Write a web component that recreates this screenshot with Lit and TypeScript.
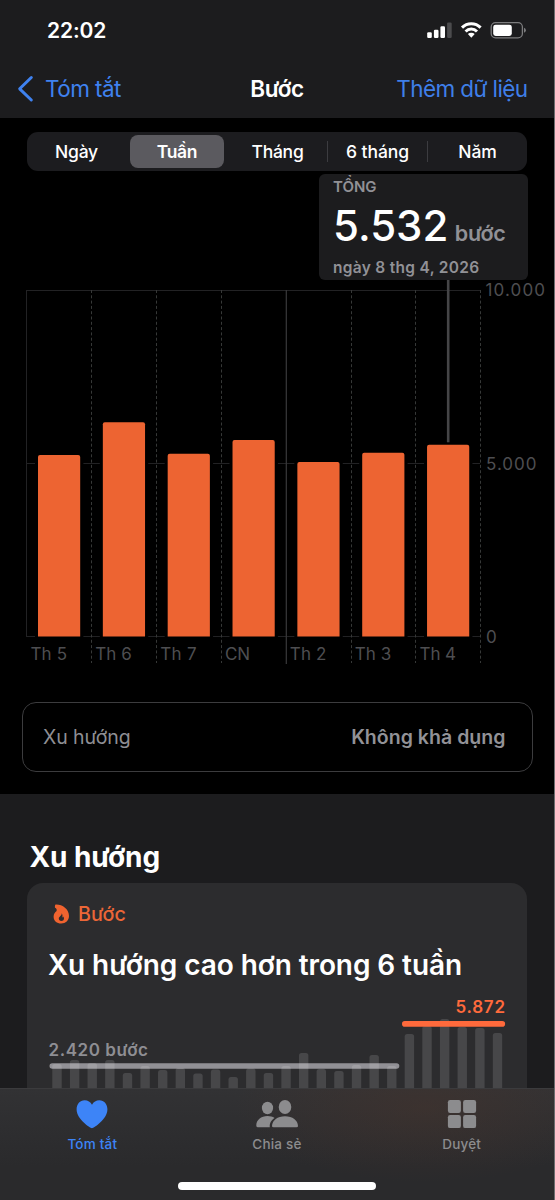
import { LitElement, html, svg, css } from "lit";
import { customElement, property } from "lit/decorators.js";

const FONT = css`Inter, "Noto Sans", sans-serif`;

const days = [
  { label: "Th 5", top: 455 },
  { label: "Th 6", top: 422.3 },
  { label: "Th 7", top: 453.7 },
  { label: "CN", top: 440 },
  { label: "Th 2", top: 462 },
  { label: "Th 3", top: 452.7 },
  { label: "Th 4", top: 444.7 },
];
const weeks = [
  1064, 1060, 1063, 1060, 1073, 1066, 1070, 1068, 1073.5, 1069.5, 1077, 1068.5, 1073,
  1066, 1053, 1069, 1071, 1065, 1055, 1066, 1034, 1026, 1019, 1027, 1028, 1033,
];

@customElement("status-bar")
class StatusBar extends LitElement {
  static styles = css`
    :host { display: flex; justify-content: space-between; height: 60px; font-family: ${FONT}; }
    .time { margin-left: 47px; line-height: 60px; font-size: 21px; font-weight: 600; color: #fff; letter-spacing: -0.1px; padding-top: 1px; height: 59px; }
    svg { display: block; margin: 20px 27px 0 0; }
  `;
  render() {
    return html`<span class="time">22:02</span>
      <svg width="102" height="20" viewBox="425 20 102 20">
        <g fill="#fff">
          <rect x="427.2" y="32.3" width="4.6" height="5.7" rx="1.2" />
          <rect x="433.9" y="29.7" width="4.6" height="8.3" rx="1.2" />
          <rect x="440.4" y="26.2" width="4.6" height="11.8" rx="1.2" />
          <rect x="447.1" y="22.6" width="4.6" height="15.4" rx="1.2" fill="#4b4b4d" />
        </g>
        <g fill="none" stroke="#fff" stroke-width="3">
          <path d="M462 27.6A13.2 13.2 0 0 1 480.6 27.6" />
          <path d="M465.6 31.5A8 8 0 0 1 477 31.5" />
        </g>
        <path d="M467.9 34.1A4.8 4.8 0 0 1 474.7 34.1L471.3 37.8Z" fill="#fff" />
        <rect x="491.2" y="22.7" width="31.2" height="15.2" rx="4.4" fill="none" stroke="#7c7c7e" stroke-width="1.3" />
        <rect x="493.2" y="24.7" width="18.6" height="11.3" rx="2.4" fill="#fff" />
        <path d="M524 27.8q1.9.6 1.9 2.5t-1.9 2.5z" fill="#7c7c7e" />
      </svg>`;
  }
}

@customElement("nav-bar")
class NavBar extends LitElement {
  static styles = css`
    :host { display: grid; grid-template-columns: 1fr auto 1fr; height: 58px; line-height: 58px; font-family: ${FONT}; font-size: 22.5px; white-space: nowrap; }
    .back { display: flex; align-items: flex-start; padding-left: 17px; gap: 11px; color: #3f82f0; letter-spacing: -0.55px; }
    .back svg { margin-top: 15px; flex: none; }
    .title { color: #fff; font-weight: 600; font-size: 22.5px; letter-spacing: -0.4px; }
    .add { text-align: right; padding-right: 26.5px; color: #3f7fe8; letter-spacing: -0.6px; }
  `;
  render() {
    return html`<span class="back"><svg width="17" height="28" viewBox="0 0 17 28"><path d="M14.3 2.5L2.7 13.8L14.3 25" fill="none" stroke="#3f82f0" stroke-width="3" stroke-linecap="round" stroke-linejoin="round" /></svg>Tóm tắt</span>
      <span class="title">Bước</span><span class="add">Thêm dữ liệu</span>`;
  }
}

@customElement("range-picker")
class RangePicker extends LitElement {
  static styles = css`
    :host { display: grid; grid-template-columns: repeat(5, 1fr); align-items: center; margin: 14px 27px 0; height: 39px; border-radius: 11px; background: #1c1c1f; font: 500 17.5px/33.5px ${FONT}; color: #fff; text-align: center; letter-spacing: -0.25px; }
    .seg { border-left: 1px solid transparent; line-height: 21px; }
    .seg:first-child { padding-right: 2px; }
    .line { border-color: #3c3c40; letter-spacing: -0.05px; }
    .on { background: #5b5a5f; border-radius: 8px; margin: 0 3px; line-height: 33.5px; border: 0; font-weight: 600; letter-spacing: -0.3px; }
  `;
  render() {
    return html`${["Ngày", "Tuần", "Tháng", "6 tháng", "Năm"].map(
      (t, i) => html`<span class="seg ${i === 1 ? "on" : ""} ${i > 2 ? "line" : ""}">${t}</span>`
    )}`;
  }
}

@customElement("step-chart")
class StepChart extends LitElement {
  static styles = css`
    :host { display: block; }
    svg { display: block; font-family: ${FONT}; }
    .axis { font-size: 17px; font-weight: 400; fill: #4e4e51; }
    .grid { stroke: #222224; stroke-width: 1; }
    .dash { stroke: #363837; stroke-width: 1; stroke-dasharray: 3 2.3; }
    .week { stroke: #39393b; stroke-width: 1.2; }
  `;
  render() {
    const x = (i: number) => 26.8 + i * 64.84;
    return html`<svg width="554" height="431" viewBox="0 271 554 431">
      <path class="grid" d="M27 290.5H480M27 463.5H480M27 636.5H480M26.5 290V637" />
      ${[1, 2, 3, 5, 6, 7].map((i) => svg`<path class="dash" d="M${Math.floor(x(i)) + 0.5} 290V663" />`)}
      <path class="week" d="M286.3 290V664" />
      ${days.map((d, i) => svg`
        <rect x=${x(i) + 8.2} y=${d.top - 3} width="48.4" height=${640 - d.top} fill="#000" />
        <path d="M${x(i) + 11.2} 636.5V${d.top + 2}q0-2 2-2h38.2q2 0 2 2V636.5z" fill="#ed6432" />
        <text class="axis" x=${x(i) + 3.7} y="660.3" textLength=${d.label === "CN" ? 25 : 36.5} lengthAdjust="spacing">${d.label}</text>`)}
      <text class="axis" x="485.5" y="296" textLength="59.5">10.000</text>
      <text class="axis" x="486" y="469.7" textLength="50.5">5.000</text>
      <text class="axis" x="486" y="643">0</text>
      <path d="M448.2 280V442.3" stroke="#454547" stroke-width="2.6" />
    </svg>`;
  }
}

@customElement("value-callout")
class ValueCallout extends LitElement {
  static styles = css`
    :host { display: block; box-sizing: border-box; width: 208.5px; height: 106.5px; padding: 3.5px 0 0 14px; border-radius: 6px; background: #1c1c1e; color: #919196; font-family: ${FONT}; font-weight: 600; white-space: nowrap; }
    .cap { font-size: 15px; line-height: 19px; font-weight: 600; }
    .row { display: flex; align-items: baseline; gap: 6.5px; height: 61.5px; line-height: 60px; font-size: 21.5px; font-weight: 600; letter-spacing: -0.3px; }
    .num { color: #fff; font-size: 42px; font-weight: 500; letter-spacing: 0; }
    .date { font-size: 15.5px; line-height: 20px; letter-spacing: 0.3px; }
  `;
  render() {
    return html`<div class="cap">TỔNG</div>
      <div class="row"><span class="num">5.532</span><span>bước</span></div>
      <div class="date">ngày 8 thg 4, 2026</div>`;
  }
}

@customElement("trend-card")
class TrendCard extends LitElement {
  static styles = css`
    :host { display: block; margin: 0 27px; height: 330px; background: #2c2c2e; border-radius: 16px; font-family: ${FONT}; white-space: nowrap; }
    .kind { display: flex; align-items: center; gap: 8px; padding: 18px 0 0 25px; height: 26px; color: #eb6637; font-size: 19.7px; font-weight: 500; letter-spacing: 0; }
    .title { margin: 18.5px 0 0.5px 21px; line-height: 38px; height: 38px; font-size: 28px; font-weight: 600; color: #fff; letter-spacing: -0.08px; }
    svg { display: block; }
    text { font-size: 17px; font-weight: 600; }
  `;
  render() {
    return html`<div class="kind"><svg width="18" height="20" viewBox="0 0 18 20"><path fill-rule="evenodd" fill="#f0632f" d="M3.6.6C10 .2 17 4.8 17 12.1c0 4.5-3.4 7.4-7.8 7.4-4.3 0-7.6-2.7-7.6-6.8C1.6 9.5 3.1 8.2 4.6 6.9 4.9 5 4.5 4.4 3 3.7 2.7 2.5 3 1.3 3.6.6zM9.7 9.3c.2 2.6-2.9 3.2-2.9 5.3 0 1.5 1.1 2.3 2.5 2.3s2.7-.8 2.7-2.5c0-.9-.4-1.5-.9-2-.1.7-.4.9-.8 1 .4-1.4.3-2.9-.6-4.1z"/></svg><span>Bước</span></div>
      <div class="title">Xu hướng cao hơn trong 6 tuần</div>
      <svg width="500" height="110" viewBox="27 984 500 110">
        <path d="M52.3 1066H396.5" stroke="#919095" stroke-width="5.6" stroke-linecap="round" />
        ${weeks.map((t, i) => svg`<rect x=${52.3 + i * 17.62} y=${t} width="9.4" height=${1110 - t} rx="2.5" fill="#fff" fill-opacity="0.13" />`)}
        <path d="M404.8 1023.9H502.3" stroke="#ff6a3c" stroke-width="5.6" stroke-linecap="round" />
        <text x="48.5" y="1055.5" textLength="99.5" fill="#8e8e93">2.420 bước</text>
        <text x="455.5" y="1013.3" textLength="49.5" fill="#ff6a3c">5.872</text>
      </svg>`;
  }
}

@customElement("tab-bar")
class TabBar extends LitElement {
  @property({ type: Number }) selected = 0;
  static styles = css`
    :host { display: flex; flex-direction: column; align-items: center; box-sizing: border-box; height: 112px; border-top: 1px solid #3b3b3d; background: radial-gradient(ellipse 190px 75px at 425px 18px, rgba(75, 52, 43, 0.42), transparent), linear-gradient(#323234, #2a2a2c 70%); font-family: ${FONT}; }
    .tabs { display: grid; grid-template-columns: repeat(3, 184.67px); height: 92px; align-self: stretch; }
    .tab { display: flex; flex-direction: column; align-items: center; color: #8c8c8e; font-size: 13.5px; font-weight: 500; letter-spacing: 0.2px; line-height: 18px; padding-top: 8px; gap: 4px; }
    .on { color: #3d84f7; }
    .home { width: 198px; height: 7.5px; border-radius: 4px; background: #fff; margin-top: 1.3px; }
    svg { display: block; }
  `;
  render() {
    const heart = html`<svg width="44" height="34" viewBox="0 0 44 34" fill="currentColor"><path d="M22 31.3C20 30.7 6.6 22.5 6.6 12.3 6.6 7 10 3.2 14.6 3.2c3.3 0 5.9 1.7 7.4 4.5 1.5-2.8 4.1-4.5 7.4-4.5 4.6 0 8 3.8 8 9.1C37.4 22.5 24 30.7 22 31.3z"/></svg>`;
    const people = html`<svg width="44" height="34" viewBox="0 0 44 34" fill="currentColor"><ellipse cx="12.5" cy="11" rx="5.6" ry="6.2"/><path d="M1.3 28.7C1 23 6.2 19 12.5 19c2.7 0 5.1.7 7.1 1.9-3.2 2-5.2 5-4.8 9.4H3Q1.4 30.2 1.3 28.7z"/><ellipse cx="30" cy="10" rx="6.3" ry="7"/><path d="M17 28.9C17.2 23.2 22.5 19.2 30 19.2S42.8 23.2 43 28.9q0 1.4-1.5 1.4H18.5q-1.5 0-1.5-1.4z"/></svg>`;
    const grid = html`<svg width="44" height="34" viewBox="0 0 44 34" fill="currentColor"><rect x="7.9" y="3" width="13" height="13" rx="2.2"/><rect x="23.1" y="3" width="13" height="13" rx="2.2"/><rect x="7.9" y="18.1" width="13" height="13" rx="2.2"/><rect x="23.1" y="18.1" width="13" height="13" rx="2.2"/></svg>`;
    const tabs = [{ i: heart, t: "Tóm tắt" }, { i: people, t: "Chia sẻ" }, { i: grid, t: "Duyệt" }];
    return html`<div class="tabs">${tabs.map((t, n) => html`<div class="tab ${n === this.selected ? "on" : ""}">${t.i}<span>${t.t}</span></div>`)}</div><div class="home"></div>`;
  }
}

@customElement("app-root")
class AppRoot extends LitElement {
  static styles = css`
    :host { display: block; position: relative; box-sizing: border-box; width: 555px; height: 1200px; overflow: hidden; border-right: 1px solid #6c6c6e; background: #1c1c1e; font-family: ${FONT}; }
    .top { height: 118px; background: #1c1c1e; }
    .main { height: 676px; background: #000; overflow: hidden; }
    .chart { position: relative; padding-top: 100px; }
    value-callout { position: absolute; left: 319px; top: 2.5px; }
    .trend { display: flex; justify-content: space-between; align-items: center; box-sizing: border-box; height: 70px; margin: 0 21.5px; padding: 0 26px 0 20.5px; border: 1.3px solid #3c3c3e; border-radius: 14px; color: #8e8e93; font-size: 19.5px; letter-spacing: -0.1px; }
    .trend b { font-weight: 600; color: #929297; letter-spacing: 0.03px; }
    h2 { margin: 0; padding: 44px 0 0 29.5px; height: 45px; line-height: 38px; font-size: 28px; font-weight: 700; letter-spacing: -0.1px; color: #fff; }
    tab-bar { position: absolute; left: 0; right: 0; bottom: 0; }
  `;
  render() {
    return html`<div class="top"><status-bar></status-bar><nav-bar></nav-bar></div>
      <div class="main">
        <range-picker></range-picker>
        <div class="chart"><step-chart></step-chart><value-callout></value-callout></div>
        <div class="trend"><span>Xu hướng</span><b>Không khả dụng</b></div>
      </div>
      <h2>Xu hướng</h2>
      <trend-card></trend-card>
      <tab-bar .selected=${0}></tab-bar>`;
  }
}
